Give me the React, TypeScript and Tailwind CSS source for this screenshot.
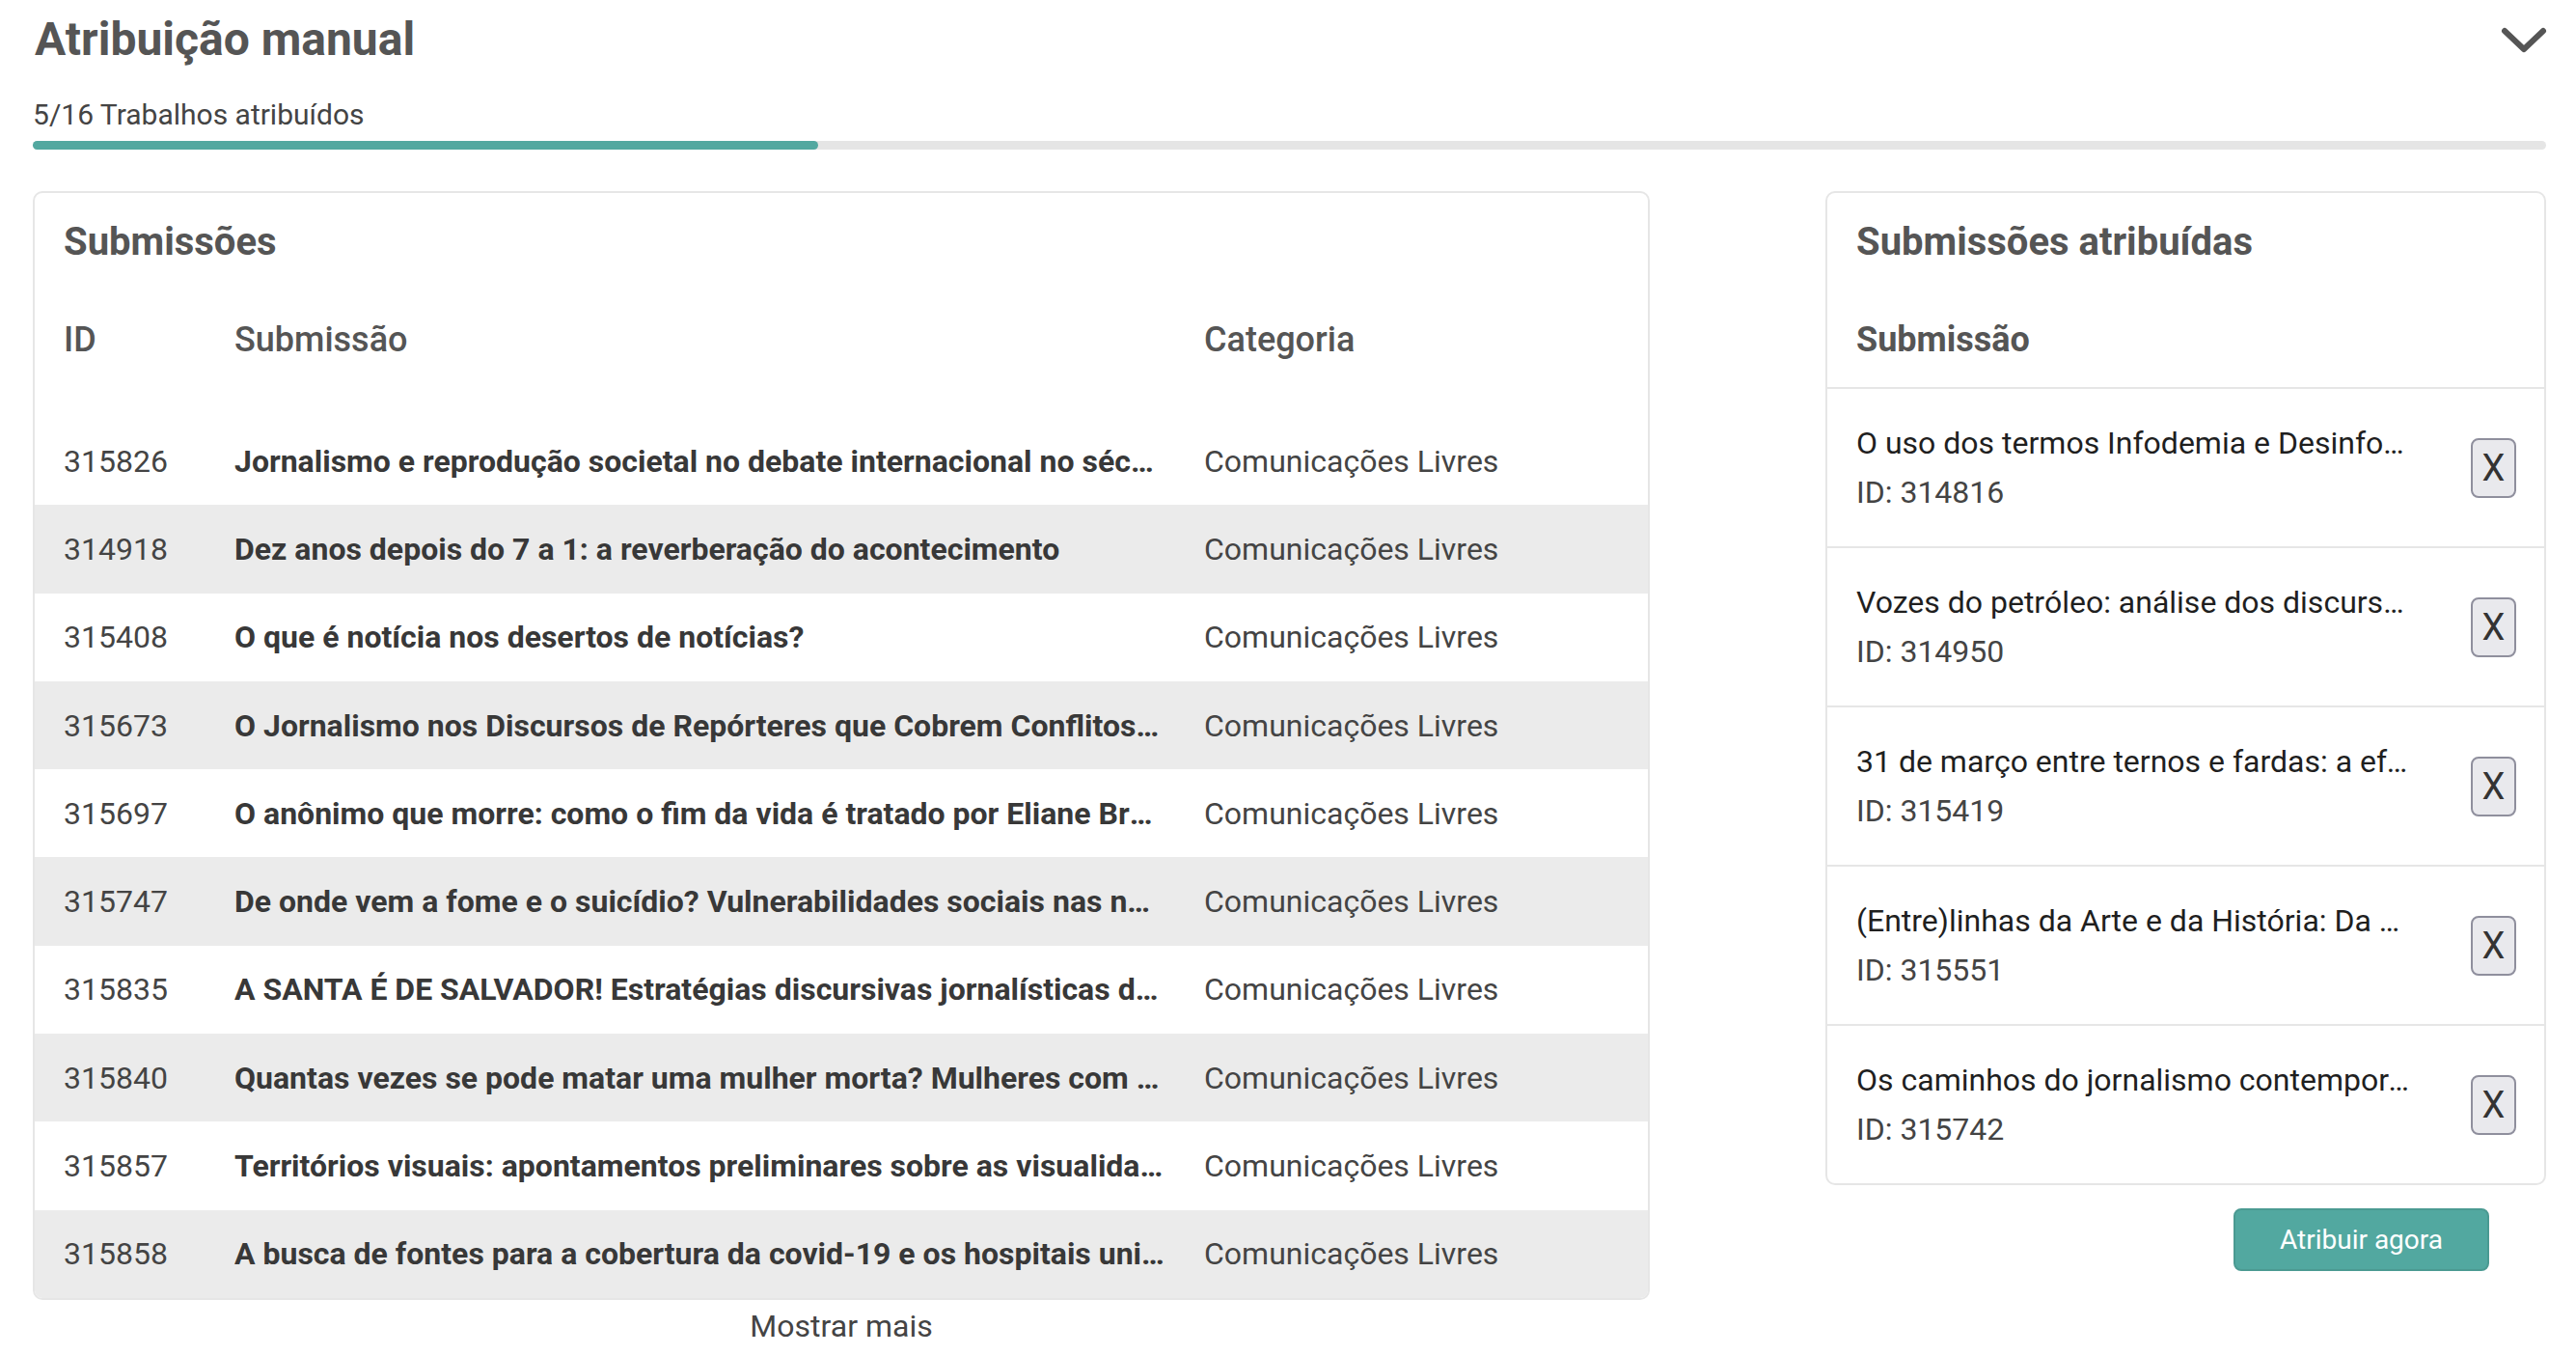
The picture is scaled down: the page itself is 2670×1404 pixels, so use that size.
import React from "react";

type Submission = { id: string; title: string; category: string };

const submissions: Submission[] = [
  { id: "315826", title: "Jornalismo e reprodução societal no debate internacional no século XXI", category: "Comunicações Livres" },
  { id: "314918", title: "Dez anos depois do 7 a 1: a reverberação do acontecimento", category: "Comunicações Livres" },
  { id: "315408", title: "O que é notícia nos desertos de notícias?", category: "Comunicações Livres" },
  { id: "315673", title: "O Jornalismo nos Discursos de Repórteres que Cobrem Conflitos Armados", category: "Comunicações Livres" },
  { id: "315697", title: "O anônimo que morre: como o fim da vida é tratado por Eliane Brum", category: "Comunicações Livres" },
  { id: "315747", title: "De onde vem a fome e o suicídio? Vulnerabilidades sociais nas narrativas", category: "Comunicações Livres" },
  { id: "315835", title: "A SANTA É DE SALVADOR! Estratégias discursivas jornalísticas de canonização", category: "Comunicações Livres" },
  { id: "315840", title: "Quantas vezes se pode matar uma mulher morta? Mulheres com deficiência", category: "Comunicações Livres" },
  { id: "315857", title: "Territórios visuais: apontamentos preliminares sobre as visualidades", category: "Comunicações Livres" },
  { id: "315858", title: "A busca de fontes para a cobertura da covid-19 e os hospitais universitários", category: "Comunicações Livres" },
];

const assigned = [
  { id: "314816", title: "O uso dos termos Infodemia e Desinformação na imprensa" },
  { id: "314950", title: "Vozes do petróleo: análise dos discursos midiáticos" },
  { id: "315419", title: "31 de março entre ternos e fardas: a efeméride do golpe" },
  { id: "315551", title: "(Entre)linhas da Arte e da História: Da crítica ao jornalismo" },
  { id: "315742", title: "Os caminhos do jornalismo contemporâneo" },
];

const total = 16;
const done = 5;

function ChevronDown() {
  return (
    <svg width="50" height="32" viewBox="0 0 50 32" fill="none">
      <polyline
        points="5,6 25,25 45,6"
        stroke="#555555"
        strokeWidth="6"
        strokeLinecap="round"
        strokeLinejoin="round"
      />
    </svg>
  );
}

export default function App() {
  return (
    <div
      className="min-h-screen bg-white pl-[34px] pr-[31px] text-[#444]"
      style={{ fontFamily: "Roboto, 'Noto Sans', sans-serif" }}
    >
      {/* Header */}
      <div className="flex items-start justify-between">
        <h1 className="mt-[13px] pl-[2px] text-[48px] font-bold leading-[56px] text-[#555]">
          Atribuição manual
        </h1>
        <div className="mr-[-2px] mt-[26px]">
          <ChevronDown />
        </div>
      </div>
      <div className="mt-[32px] text-[30px] leading-[36px] text-[#444]">
        {done}/{total} Trabalhos atribuídos
      </div>
      <div className="mt-[9px] h-[9px] w-full rounded-full bg-[#e5e5e5]">
        <div
          className="h-full rounded-full bg-[#52a8a0]"
          style={{ width: `${(done / total) * 100}%` }}
        />
      </div>

      <div className="mt-[43px] flex items-start justify-between">
        {/* Submissions table */}
        <div className="flex w-[1676px] flex-col items-stretch">
          <div className="overflow-hidden rounded-[10px] border-2 border-[#e6e6e6] pt-[25px]">
            <div className="pl-[30px] text-[40px] font-bold leading-[52px] text-[#555]">
              Submissões
            </div>
            <div className="mt-[51px] grid grid-cols-[177px_1005px_1fr] pl-[30px] text-[36px] font-medium leading-[48px] text-[#555]">
              <div>ID</div>
              <div>Submissão</div>
              <div>Categoria</div>
            </div>
            <div className="mt-[56px]">
              {submissions.map((s, i) => (
                <div
                  key={s.id}
                  className={
                    "grid h-[91.3px] grid-cols-[177px_1005px_1fr] items-center pl-[30px] text-[32px] " +
                    (i % 2 === 1 ? "bg-[#ebebeb]" : "bg-white")
                  }
                >
                  <div className="text-[#444]">{s.id}</div>
                  <div className="truncate pr-[40px] font-bold text-[#383838]">{s.title}</div>
                  <div className="text-[#444]">{s.category}</div>
                </div>
              ))}
            </div>
          </div>
          <button className="mt-[7px] self-center text-[32px] leading-[40px] text-[#444]">
            Mostrar mais
          </button>
        </div>

        {/* Assigned submissions */}
        <div className="flex w-[747px] flex-col">
          <div className="rounded-[10px] border-2 border-[#e6e6e6] pt-[25px]">
            <div className="pl-[30px] text-[40px] font-bold leading-[52px] text-[#555]">
              Submissões atribuídas
            </div>
            <div className="mt-[51px] pb-[25px] pl-[30px] text-[36px] font-bold leading-[48px] text-[#555]">
              Submissão
            </div>
            {assigned.map((a) => (
              <div
                key={a.id}
                className="flex items-center gap-[62px] border-t-2 border-[#e6e6e6] pb-[32px] pl-[30px] pr-[29px] pt-[32px]"
              >
                <div className="min-w-0 flex-1">
                  <div className="truncate text-[32px] leading-[48px] text-[#1f1f1f]">{a.title}</div>
                  <div className="mt-[3px] text-[32px] leading-[48px] text-[#444]">ID: {a.id}</div>
                </div>
                <button className="flex h-[62px] w-[47px] items-center justify-center rounded-[8px] border-2 border-[#8f8f9d] bg-[#e9e9ed] text-[38px] font-normal leading-none text-[#333]">
                  X
                </button>
              </div>
            ))}
          </div>
          <div className="mt-[24px] flex justify-end pr-[59px]">
            <button className="h-[65px] w-[265px] rounded-[8px] border-2 border-[#4b9a92] bg-[#52a8a0] text-[28px] text-white">
              Atribuir agora
            </button>
          </div>
        </div>
      </div>
    </div>
  );
}
